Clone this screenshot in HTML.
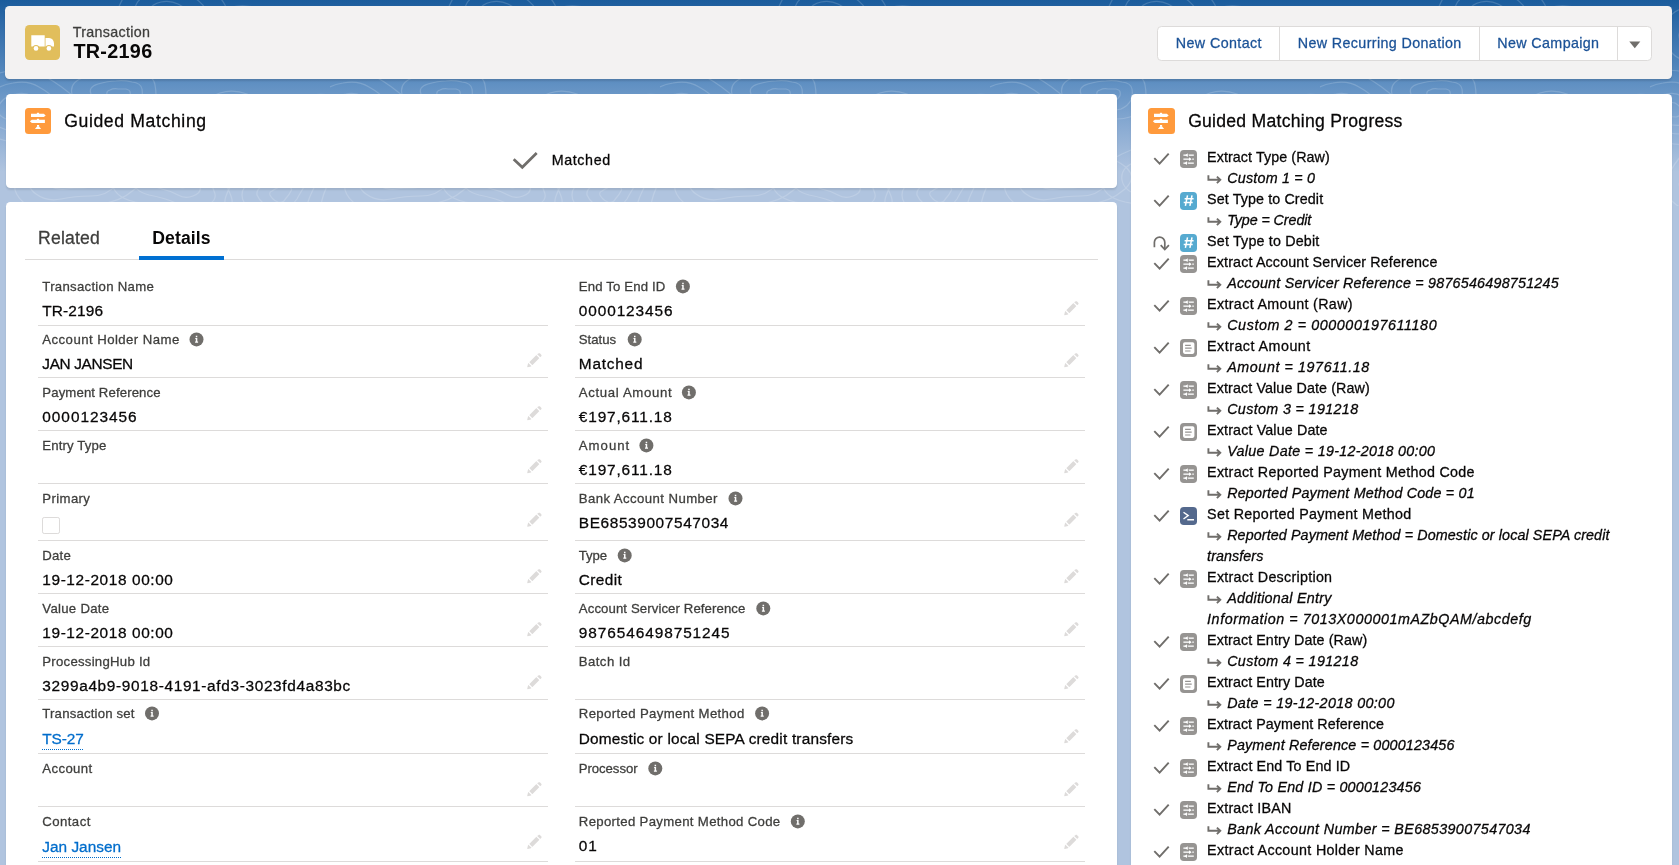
<!DOCTYPE html>
<html lang="en"><head><meta charset="utf-8"><title>TR-2196 | Transaction</title>
<style>
html,body{margin:0;padding:0}
body{width:1679px;height:865px;overflow:hidden;position:relative;background:#b0c4df;font-family:"Liberation Sans",sans-serif;font-size:14.3px;color:#080707}
.bg{position:absolute;left:0;top:0;width:1679px;height:172px;background:linear-gradient(to bottom,#1a5c9c 0,#2e6aa8 22px,#5a8cc0 78px,#88aad2 125px,#b0c4df 172px)}
.swirl{position:absolute;left:0;top:0}
.t{position:absolute;white-space:nowrap;margin:0;font-weight:normal;-webkit-text-stroke:.28px currentColor}
.card{position:absolute;background:#fff;border-radius:4.4px;box-shadow:0 2px 2px 0 rgba(0,0,0,.1)}
.hdr{position:absolute;left:5px;top:6px;width:1667px;height:72.5px;background:#f3f2f2;border-radius:4.4px;box-shadow:0 2px 2px 0 rgba(0,0,0,.12)}
.abs{position:absolute}
.app{position:absolute;left:0;top:0;width:1679px;height:865px;will-change:transform}
.btns{position:absolute;left:1157px;top:26px;width:495px;height:35px;box-sizing:border-box;border:1px solid #dddbda;border-radius:4.4px;background:#fff}
.btns i{position:absolute;top:0;width:1px;height:33px;background:#dddbda}
.line{position:absolute;height:1px;background:#dddbda}
a.t{text-decoration:underline dotted #006dcc;text-decoration-thickness:1px;text-underline-offset:4.500px}
.ic{position:absolute;width:17px;height:18px;border-radius:3.800px}
svg{display:block;overflow:visible}
</style></head><body>
<div class="bg"></div>
<svg class="swirl" width="1679" height="206" viewBox="0 0 1679 206"><defs><pattern id="topo" width="330" height="210" patternUnits="userSpaceOnUse"><path d="M65 33Q67 35 65 37Q62 39 59 40Q56 40 53 41Q49 42 46 40Q43 38 43 35Q44 32 46 30Q48 27 53 27Q57 27 60 29Q63 31 65 33zM78 30Q83 35 77 39Q70 44 64 45Q58 47 49 49Q41 52 35 47Q29 41 29 35Q30 29 35 23Q40 17 50 18Q59 19 66 22Q73 25 78 30zM94 26Q101 35 90 42Q78 48 69 52Q60 56 46 59Q32 63 23 54Q14 45 13 35Q12 24 21 15Q30 6 46 8Q61 10 74 14Q86 18 94 26zM176 17Q177 20 175 22Q173 25 170 25Q167 26 163 26Q160 26 157 25Q154 23 155 20Q156 18 158 15Q159 13 163 12Q167 11 171 13Q175 14 176 17zM190 14Q193 20 188 25Q182 30 175 31Q168 33 160 34Q153 35 147 30Q142 26 143 20Q145 15 149 10Q152 4 161 2Q170 -0 178 4Q186 8 190 14zM206 10Q212 20 202 28Q193 36 182 39Q171 41 157 43Q144 45 136 37Q128 29 130 21Q132 12 137 3Q143 -6 158 -9Q173 -12 187 -6Q201 -0 206 10zM225 5Q232 20 217 31Q203 42 188 47Q173 52 154 54Q135 56 124 44Q114 33 115 20Q117 8 125 -5Q133 -18 155 -21Q177 -25 197 -17Q217 -10 225 5zM285 43Q289 45 286 47Q283 50 280 50Q276 50 273 51Q270 51 267 49Q264 48 263 45Q262 42 265 39Q267 36 272 37Q277 39 279 40Q282 41 285 43zM298 41Q305 45 299 50Q293 55 286 56Q278 58 271 58Q264 59 258 55Q252 51 249 44Q245 38 251 31Q258 25 268 29Q278 32 285 34Q291 36 298 41zM313 37Q324 45 313 53Q303 61 292 64Q281 68 269 67Q257 67 248 60Q239 54 231 43Q223 32 235 23Q248 13 264 19Q280 25 292 27Q303 29 313 37zM330 33Q342 45 328 56Q315 68 299 74Q284 80 267 77Q250 74 237 66Q224 58 211 42Q197 26 217 13Q238 1 260 9Q282 17 300 19Q317 21 330 33zM30 108Q32 110 31 113Q31 116 26 117Q22 117 19 116Q16 115 13 114Q10 112 10 110Q10 107 12 106Q15 104 18 103Q22 102 25 103Q29 105 30 108zM43 105Q48 110 46 117Q44 124 34 125Q24 126 17 124Q10 121 4 118Q-2 115 -2 110Q-2 105 3 100Q8 95 16 94Q25 92 32 96Q39 99 43 105zM58 102Q67 110 63 121Q60 133 43 134Q27 135 15 132Q3 130 -6 124Q-16 119 -15 110Q-15 101 -8 93Q-1 85 13 83Q28 80 39 87Q50 93 58 102zM75 98Q89 110 82 126Q76 142 52 144Q29 146 12 142Q-5 139 -17 131Q-30 122 -29 110Q-29 98 -20 86Q-11 73 10 71Q31 68 46 77Q62 86 75 98zM130 92Q131 95 129 97Q128 99 125 101Q122 102 119 101Q116 100 112 99Q109 98 107 95Q106 91 110 90Q114 88 118 89Q122 89 126 89Q130 90 130 92zM142 89Q143 95 141 100Q138 106 131 109Q124 111 117 109Q111 106 103 104Q95 101 91 94Q88 87 98 84Q108 81 116 81Q124 80 132 82Q141 83 142 89zM155 85Q157 95 155 104Q152 114 140 117Q127 121 116 117Q105 113 90 109Q76 106 72 94Q69 82 85 77Q101 73 114 71Q127 69 140 72Q154 76 155 85zM236 117Q237 120 235 123Q234 125 230 126Q227 127 224 126Q222 124 218 123Q215 123 213 120Q212 117 216 115Q220 114 223 113Q227 112 231 113Q236 114 236 117zM249 113Q251 120 248 126Q246 132 237 133Q229 135 223 132Q217 129 209 127Q201 126 199 120Q197 113 206 110Q214 107 222 104Q230 102 239 104Q248 107 249 113zM264 110Q268 120 264 130Q261 141 246 142Q231 142 222 139Q212 135 197 133Q183 130 182 120Q181 109 194 104Q206 98 220 93Q233 89 247 94Q261 99 264 110zM320 137Q320 140 320 143Q320 146 316 148Q313 150 309 148Q306 145 304 144Q303 142 302 140Q301 138 303 136Q305 134 309 133Q312 131 316 133Q320 134 320 137zM332 134Q332 140 333 147Q334 154 325 158Q316 161 308 156Q300 152 296 148Q292 144 292 140Q292 135 295 131Q299 127 307 123Q315 119 324 123Q332 127 332 134zM346 130Q348 140 349 152Q351 164 335 168Q319 173 306 167Q293 160 286 154Q279 148 281 140Q282 133 287 126Q292 119 306 112Q319 104 332 112Q344 120 346 130zM361 127Q366 140 368 157Q370 174 346 180Q322 185 303 177Q285 169 275 160Q265 151 269 141Q273 131 278 120Q283 109 303 99Q323 89 340 101Q356 114 361 127zM81 173Q83 175 82 178Q81 181 76 181Q72 181 68 181Q65 181 61 180Q57 178 59 176Q61 173 63 171Q66 170 69 169Q72 168 75 169Q78 171 81 173zM94 170Q101 175 97 182Q93 188 83 188Q73 188 65 189Q57 190 49 186Q41 182 46 176Q51 170 55 166Q59 162 67 161Q74 159 80 162Q87 165 94 170zM111 167Q124 175 116 185Q107 196 91 196Q75 196 61 199Q47 202 36 194Q25 186 32 177Q39 167 45 160Q51 153 64 152Q76 150 87 155Q98 159 111 167zM130 163Q150 175 135 189Q119 203 98 204Q78 206 57 210Q36 215 23 202Q10 190 17 177Q24 164 33 153Q42 141 60 142Q78 143 94 147Q111 152 130 163zM188 178Q188 180 189 183Q189 185 186 187Q182 189 179 187Q176 185 172 184Q169 183 167 180Q165 176 170 175Q174 173 178 173Q182 173 185 174Q188 175 188 178zM197 175Q198 180 200 186Q202 193 193 196Q185 199 178 195Q171 191 162 189Q153 187 151 179Q148 172 158 169Q168 166 176 165Q184 164 190 167Q197 170 197 175zM208 173Q210 180 214 191Q219 202 203 206Q188 209 176 203Q165 198 149 195Q134 191 132 180Q130 168 145 162Q160 156 174 154Q187 152 196 159Q205 166 208 173zM218 171Q225 180 231 196Q237 212 213 215Q190 218 174 212Q158 206 135 202Q112 197 112 180Q113 163 132 154Q150 145 171 142Q191 138 202 150Q212 162 218 171zM291 191Q289 195 287 197Q286 198 284 201Q282 203 278 202Q275 201 273 199Q271 197 270 195Q269 192 272 191Q275 189 279 187Q282 186 288 187Q293 188 291 191zM304 187Q299 195 297 199Q294 203 289 208Q285 214 277 211Q269 208 264 204Q259 200 257 195Q256 189 263 186Q269 183 277 178Q286 174 297 176Q308 179 304 187zM317 182Q310 195 308 202Q306 210 297 217Q288 224 275 220Q262 216 252 210Q242 204 242 195Q242 186 253 180Q263 175 277 166Q290 157 307 163Q325 169 317 182zM331 178Q322 195 321 206Q320 218 305 226Q290 234 273 229Q255 224 238 217Q221 210 226 196Q230 183 243 175Q256 167 276 153Q295 139 318 150Q341 160 331 178z" fill="none" stroke="#fff" stroke-opacity=".17" stroke-width="1.2"/></pattern></defs><rect width="1679" height="206" fill="url(#topo)"/></svg>
<main class="app">

<header class="hdr">
<div class="abs" style="left:20px;top:19px;width:35px;height:35px;border-radius:4.4px;background:#e1be5c"><svg width="35" height="35" viewBox="0 0 35 35"><path fill="#fff" d="M6.300 10.200h13.400v11.300H6.300zM20.500 13h3.600c3 .2 4.700 2.400 4.900 5.200v3.300h-8.500z"/><circle cx="11" cy="23.400" r="3.500" fill="#e1be5c"/><circle cx="23.900" cy="23.400" r="3.500" fill="#e1be5c"/><circle cx="11" cy="23.400" r="2.300" fill="#fff"/><circle cx="23.900" cy="23.400" r="2.300" fill="#fff"/></svg></div>
</header>
<div id="t1" class="t " style="left:72.74px;top:22px;font-size:14.3px;line-height:21px;color:#3e3e3c;letter-spacing:0.300px;">Transaction</div>
<h1 id="t2" class="t " style="left:73.41px;top:36px;font-size:19.8px;line-height:30px;color:#080707;font-weight:bold;-webkit-text-stroke:0;letter-spacing:0.297px;">TR-2196</h1>
<div class="btns"><i style="left:121px"></i><i style="left:321px"></i><i style="left:459px"></i><svg class="abs" style="left:471px;top:14px" width="12" height="8" viewBox="0 0 12 8"><path d="M0.300 0.500h11L5.800 7.300z" fill="#706e6b"/></svg></div>
<div id="t3" class="t " style="left:1175.74px;top:33px;font-size:14.3px;line-height:21px;color:#1b5297;letter-spacing:0.400px;">New Contact</div>
<div id="t4" class="t " style="left:1297.74px;top:33px;font-size:14.3px;line-height:21px;color:#1b5297;letter-spacing:0.372px;">New Recurring Donation</div>
<div id="t5" class="t " style="left:1497.34px;top:33px;font-size:14.3px;line-height:21px;color:#1b5297;letter-spacing:0.363px;">New Campaign</div>
<section class="card" style="left:6px;top:94px;width:1111px;height:93.500px">
<div class="abs" style="left:19px;top:14px;width:26px;height:26px;border-radius:3.500px;background:#ff9a3c"><svg width="26" height="26" viewBox="0 0 26 26"><g fill="#fff"><rect x="11.900" y="4.800" width="2.200" height="1.200"/><path d="M6 5.800H18.800L20.700 7.450 18.800 9.100H6z"/><rect x="11.900" y="10.800" width="2.200" height="1.200"/><path d="M19.900 11.800H6.800L4.900 13.350 6.800 14.900H19.900z"/><rect x="12" y="17" width="2.100" height="1.800"/><path d="M12 18.500h2.100l2 2.500H9.900z"/></g></svg></div>
<svg class="abs" style="left:506px;top:57px" width="28" height="20" viewBox="0 0 28 20"><path d="M1.700 8.200l8.600 8.100L24.700 2" fill="none" stroke="#706e6b" stroke-width="2.700"/></svg>
</section>
<h2 id="t6" class="t " style="left:64.14px;top:108px;font-size:17.6px;line-height:26px;color:#080707;letter-spacing:0.643px;">Guided Matching</h2>
<div id="t7" class="t " style="left:551.74px;top:150px;font-size:14.3px;line-height:21px;color:#080707;letter-spacing:0.602px;">Matched</div>
<section class="card" style="left:6px;top:202px;width:1111px;height:700px"></section>
<div id="t8" class="t " style="left:38.04px;top:225px;font-size:17.6px;line-height:26px;color:#3e3e3c;letter-spacing:0.200px;">Related</div>
<div id="t9" class="t " style="left:152.34px;top:225px;font-size:17.6px;line-height:26px;color:#080707;font-weight:bold;-webkit-text-stroke:0;letter-spacing:0.069px;">Details</div>
<div class="line" style="left:25px;top:259px;width:1073px"></div>
<div class="abs" style="left:139px;top:256px;width:85px;height:3.500px;background:#0070d2"></div>
<div class="fld">
<span id="t10" class="t " style="left:42.30px;top:277px;font-size:13.2px;line-height:20px;color:#3e3e3c;letter-spacing:0.283px;">Transaction Name</span>
<span id="t11" class="t " style="left:42.30px;top:299px;font-size:15.4px;line-height:23px;color:#080707;letter-spacing:0.137px;">TR-2196</span>
<div class="line" style="left:38px;top:325px;width:510px"></div>
</div>
<div class="fld">
<span id="t12" class="t " style="left:42.30px;top:330px;font-size:13.2px;line-height:20px;color:#3e3e3c;letter-spacing:0.445px;">Account Holder Name</span>
<svg class="abs" style="left:189px;top:332px" width="15" height="15"><g transform="translate(0.50,0.50)"><circle cx="7" cy="6.900" r="7" fill="#706e6b"/><path d="M6.300 3.300h1.500v1.500H6.300zM5.800 5.400h2v3.700h.8v1.200H5.600V9.100h.7V6.400h-.5z" fill="#fff"/></g></svg>
<span id="t13" class="t " style="left:42.30px;top:352px;font-size:15.4px;line-height:23px;color:#080707;letter-spacing:-0.357px;">JAN JANSEN</span>
<svg class="abs" style="left:526px;top:352px" width="17" height="17"><g transform="translate(0.60,0.30) scale(0.30000)"><path fill="#dddbda" d="M9.500 33.400l8.900 8.900c.4.400 1 .4 1.400 0L42 20c.4-.4.4-1 0-1.400l-8.800-8.800c-.4-.4-1-.4-1.400 0L9.500 32.100c-.4.400-.4 1 0 1.300zM36.100 5.700c-.4.400-.4 1 0 1.400l8.800 8.800c.4.400 1 .4 1.400 0l2.500-2.500c1.600-1.500 1.600-3.900 0-5.500l-3.800-3.800c-1.600-1.600-4.100-1.600-5.700 0l-3.200 1.600zM2.100 48.200c-.2 1 .7 1.900 1.700 1.700l10.900-2.600c.4-.1.700-.3.900-.5l.2-.2c.2-.2.300-.9-.1-1.300l-9-9c-.4-.4-1.100-.3-1.300-.1l-.2.200c-.3.300-.4.600-.5.900L2.100 48.200z"/></g></svg>
<div class="line" style="left:38px;top:377px;width:510px"></div>
</div>
<div class="fld">
<span id="t14" class="t " style="left:42.30px;top:383px;font-size:13.2px;line-height:20px;color:#3e3e3c;letter-spacing:0.109px;">Payment Reference</span>
<span id="t15" class="t " style="left:42.30px;top:405px;font-size:15.4px;line-height:23px;color:#080707;letter-spacing:0.976px;">0000123456</span>
<svg class="abs" style="left:526px;top:405px" width="17" height="17"><g transform="translate(0.60,0.30) scale(0.30000)"><path fill="#dddbda" d="M9.500 33.400l8.900 8.900c.4.400 1 .4 1.400 0L42 20c.4-.4.4-1 0-1.400l-8.800-8.800c-.4-.4-1-.4-1.400 0L9.500 32.100c-.4.400-.4 1 0 1.300zM36.100 5.700c-.4.400-.4 1 0 1.400l8.800 8.800c.4.400 1 .4 1.400 0l2.500-2.500c1.600-1.500 1.600-3.900 0-5.500l-3.800-3.800c-1.600-1.600-4.100-1.600-5.700 0l-3.200 1.600zM2.100 48.200c-.2 1 .7 1.900 1.700 1.700l10.900-2.600c.4-.1.700-.3.900-.5l.2-.2c.2-.2.300-.9-.1-1.300l-9-9c-.4-.4-1.100-.3-1.300-.1l-.2.200c-.3.300-.4.600-.5.900L2.100 48.200z"/></g></svg>
<div class="line" style="left:38px;top:430px;width:510px"></div>
</div>
<div class="fld">
<span id="t16" class="t " style="left:42.30px;top:436px;font-size:13.2px;line-height:20px;color:#3e3e3c;letter-spacing:0.126px;">Entry Type</span>
<svg class="abs" style="left:526px;top:458px" width="17" height="17"><g transform="translate(0.60,0.30) scale(0.30000)"><path fill="#dddbda" d="M9.500 33.400l8.900 8.900c.4.400 1 .4 1.400 0L42 20c.4-.4.4-1 0-1.400l-8.800-8.800c-.4-.4-1-.4-1.400 0L9.500 32.100c-.4.400-.4 1 0 1.300zM36.100 5.700c-.4.400-.4 1 0 1.400l8.800 8.800c.4.400 1 .4 1.400 0l2.500-2.500c1.600-1.500 1.600-3.900 0-5.500l-3.800-3.800c-1.600-1.600-4.100-1.600-5.700 0l-3.200 1.600zM2.100 48.200c-.2 1 .7 1.900 1.700 1.700l10.900-2.600c.4-.1.700-.3.900-.5l.2-.2c.2-.2.300-.9-.1-1.300l-9-9c-.4-.4-1.100-.3-1.300-.1l-.2.200c-.3.300-.4.600-.5.900L2.100 48.200z"/></g></svg>
<div class="line" style="left:38px;top:483px;width:510px"></div>
</div>
<div class="fld">
<span id="t17" class="t " style="left:42.30px;top:489px;font-size:13.2px;line-height:20px;color:#3e3e3c;letter-spacing:0.370px;">Primary</span>
<svg class="abs" style="left:526px;top:511px" width="17" height="17"><g transform="translate(0.60,0.80) scale(0.30000)"><path fill="#dddbda" d="M9.500 33.400l8.900 8.900c.4.400 1 .4 1.400 0L42 20c.4-.4.4-1 0-1.400l-8.800-8.800c-.4-.4-1-.4-1.400 0L9.500 32.100c-.4.400-.4 1 0 1.300zM36.100 5.700c-.4.400-.4 1 0 1.400l8.800 8.800c.4.400 1 .4 1.400 0l2.500-2.500c1.600-1.500 1.600-3.900 0-5.500l-3.800-3.800c-1.600-1.600-4.100-1.600-5.700 0l-3.200 1.600zM2.100 48.200c-.2 1 .7 1.900 1.700 1.700l10.900-2.600c.4-.1.700-.3.900-.5l.2-.2c.2-.2.300-.9-.1-1.300l-9-9c-.4-.4-1.100-.3-1.300-.1l-.2.200c-.3.300-.4.600-.5.900L2.100 48.200z"/></g></svg>
<div class="line" style="left:38px;top:540px;width:510px"></div>
</div>
<div class="fld">
<span id="t18" class="t " style="left:42.30px;top:546px;font-size:13.2px;line-height:20px;color:#3e3e3c;letter-spacing:0.198px;">Date</span>
<span id="t19" class="t " style="left:42.30px;top:568px;font-size:15.4px;line-height:23px;color:#080707;letter-spacing:0.608px;">19-12-2018 00:00</span>
<svg class="abs" style="left:526px;top:568px" width="17" height="17"><g transform="translate(0.60,0.30) scale(0.30000)"><path fill="#dddbda" d="M9.500 33.400l8.900 8.900c.4.400 1 .4 1.400 0L42 20c.4-.4.4-1 0-1.400l-8.800-8.800c-.4-.4-1-.4-1.400 0L9.500 32.100c-.4.400-.4 1 0 1.300zM36.100 5.700c-.4.400-.4 1 0 1.400l8.800 8.800c.4.400 1 .4 1.400 0l2.500-2.500c1.600-1.500 1.600-3.900 0-5.500l-3.800-3.800c-1.600-1.600-4.100-1.600-5.700 0l-3.200 1.600zM2.100 48.200c-.2 1 .7 1.900 1.700 1.700l10.900-2.600c.4-.1.700-.3.900-.5l.2-.2c.2-.2.300-.9-.1-1.300l-9-9c-.4-.4-1.100-.3-1.300-.1l-.2.200c-.3.300-.4.600-.5.900L2.100 48.200z"/></g></svg>
<div class="line" style="left:38px;top:593px;width:510px"></div>
</div>
<div class="fld">
<span id="t20" class="t " style="left:42.30px;top:599px;font-size:13.2px;line-height:20px;color:#3e3e3c;letter-spacing:0.285px;">Value Date</span>
<span id="t21" class="t " style="left:42.30px;top:621px;font-size:15.4px;line-height:23px;color:#080707;letter-spacing:0.608px;">19-12-2018 00:00</span>
<svg class="abs" style="left:526px;top:621px" width="17" height="17"><g transform="translate(0.60,0.30) scale(0.30000)"><path fill="#dddbda" d="M9.500 33.400l8.900 8.900c.4.400 1 .4 1.400 0L42 20c.4-.4.4-1 0-1.400l-8.800-8.800c-.4-.4-1-.4-1.400 0L9.500 32.100c-.4.400-.4 1 0 1.300zM36.100 5.700c-.4.400-.4 1 0 1.400l8.800 8.800c.4.400 1 .4 1.400 0l2.500-2.500c1.600-1.500 1.600-3.900 0-5.500l-3.800-3.800c-1.600-1.600-4.100-1.600-5.700 0l-3.200 1.600zM2.100 48.200c-.2 1 .7 1.900 1.700 1.700l10.900-2.600c.4-.1.700-.3.900-.5l.2-.2c.2-.2.300-.9-.1-1.300l-9-9c-.4-.4-1.100-.3-1.300-.1l-.2.200c-.3.300-.4.600-.5.900L2.100 48.200z"/></g></svg>
<div class="line" style="left:38px;top:646px;width:510px"></div>
</div>
<div class="fld">
<span id="t22" class="t " style="left:42.30px;top:652px;font-size:13.2px;line-height:20px;color:#3e3e3c;letter-spacing:0.250px;">ProcessingHub Id</span>
<span id="t23" class="t " style="left:42.30px;top:674px;font-size:15.4px;line-height:23px;color:#080707;letter-spacing:0.657px;">3299a4b9-9018-4191-afd3-3023fd4a83bc</span>
<svg class="abs" style="left:526px;top:674px" width="17" height="17"><g transform="translate(0.60,0.30) scale(0.30000)"><path fill="#dddbda" d="M9.500 33.400l8.900 8.900c.4.400 1 .4 1.400 0L42 20c.4-.4.4-1 0-1.400l-8.800-8.800c-.4-.4-1-.4-1.400 0L9.500 32.100c-.4.400-.4 1 0 1.300zM36.100 5.700c-.4.400-.4 1 0 1.400l8.800 8.800c.4.400 1 .4 1.400 0l2.500-2.500c1.600-1.500 1.600-3.900 0-5.500l-3.800-3.800c-1.600-1.600-4.100-1.600-5.700 0l-3.200 1.600zM2.100 48.200c-.2 1 .7 1.900 1.700 1.700l10.900-2.600c.4-.1.700-.3.900-.5l.2-.2c.2-.2.300-.9-.1-1.300l-9-9c-.4-.4-1.100-.3-1.300-.1l-.2.200c-.3.300-.4.600-.5.900L2.100 48.200z"/></g></svg>
<div class="line" style="left:38px;top:699px;width:510px"></div>
</div>
<div class="fld">
<span id="t24" class="t " style="left:42.30px;top:704px;font-size:13.2px;line-height:20px;color:#3e3e3c;letter-spacing:0.182px;">Transaction set</span>
<svg class="abs" style="left:145px;top:706px" width="15" height="15"><g transform="translate(0.00,0.50)"><circle cx="7" cy="6.900" r="7" fill="#706e6b"/><path d="M6.300 3.300h1.500v1.500H6.300zM5.800 5.400h2v3.700h.8v1.200H5.600V9.100h.7V6.400h-.5z" fill="#fff"/></g></svg>
<a id="t25" class="t " style="left:42.30px;top:727px;font-size:15.4px;line-height:23px;color:#006dcc;letter-spacing:-0.100px;">TS-27</a>
<div class="line" style="left:38px;top:753px;width:510px"></div>
</div>
<div class="fld">
<span id="t26" class="t " style="left:42.30px;top:759px;font-size:13.2px;line-height:20px;color:#3e3e3c;letter-spacing:0.370px;">Account</span>
<svg class="abs" style="left:526px;top:781px" width="17" height="17"><g transform="translate(0.60,0.30) scale(0.30000)"><path fill="#dddbda" d="M9.500 33.400l8.900 8.900c.4.400 1 .4 1.400 0L42 20c.4-.4.4-1 0-1.400l-8.800-8.800c-.4-.4-1-.4-1.400 0L9.500 32.100c-.4.400-.4 1 0 1.300zM36.100 5.700c-.4.400-.4 1 0 1.400l8.800 8.800c.4.400 1 .4 1.400 0l2.500-2.500c1.600-1.500 1.600-3.900 0-5.500l-3.800-3.800c-1.600-1.600-4.100-1.600-5.700 0l-3.200 1.600zM2.100 48.200c-.2 1 .7 1.900 1.700 1.700l10.900-2.600c.4-.1.700-.3.900-.5l.2-.2c.2-.2.300-.9-.1-1.300l-9-9c-.4-.4-1.100-.3-1.300-.1l-.2.200c-.3.300-.4.600-.5.900L2.100 48.200z"/></g></svg>
<div class="line" style="left:38px;top:806px;width:510px"></div>
</div>
<div class="fld">
<span id="t27" class="t " style="left:42.30px;top:812px;font-size:13.2px;line-height:20px;color:#3e3e3c;letter-spacing:0.430px;">Contact</span>
<a id="t28" class="t " style="left:42.30px;top:835px;font-size:15.4px;line-height:23px;color:#006dcc;">Jan Jansen</a>
<svg class="abs" style="left:526px;top:834px" width="17" height="17"><g transform="translate(0.60,0.00) scale(0.30000)"><path fill="#dddbda" d="M9.500 33.400l8.900 8.900c.4.400 1 .4 1.400 0L42 20c.4-.4.4-1 0-1.400l-8.800-8.800c-.4-.4-1-.4-1.400 0L9.500 32.100c-.4.400-.4 1 0 1.300zM36.100 5.700c-.4.400-.4 1 0 1.400l8.800 8.800c.4.400 1 .4 1.400 0l2.500-2.500c1.600-1.500 1.600-3.900 0-5.500l-3.800-3.800c-1.600-1.600-4.100-1.600-5.700 0l-3.200 1.600zM2.100 48.200c-.2 1 .7 1.900 1.700 1.700l10.900-2.600c.4-.1.700-.3.900-.5l.2-.2c.2-.2.300-.9-.1-1.300l-9-9c-.4-.4-1.100-.3-1.300-.1l-.2.200c-.3.300-.4.600-.5.900L2.100 48.200z"/></g></svg>
<div class="line" style="left:38px;top:861px;width:510px"></div>
</div>
<div class="fld">
<span id="t29" class="t " style="left:578.80px;top:277px;font-size:13.2px;line-height:20px;color:#3e3e3c;letter-spacing:0.145px;">End To End ID</span>
<svg class="abs" style="left:675px;top:279px" width="15" height="15"><g transform="translate(0.90,0.50)"><circle cx="7" cy="6.900" r="7" fill="#706e6b"/><path d="M6.300 3.300h1.500v1.500H6.300zM5.800 5.400h2v3.700h.8v1.200H5.600V9.100h.7V6.400h-.5z" fill="#fff"/></g></svg>
<span id="t30" class="t " style="left:578.80px;top:299px;font-size:15.4px;line-height:23px;color:#080707;letter-spacing:0.904px;">0000123456</span>
<svg class="abs" style="left:1063px;top:300px" width="17" height="17"><g transform="translate(0.60,0.30) scale(0.30000)"><path fill="#dddbda" d="M9.500 33.400l8.900 8.900c.4.400 1 .4 1.400 0L42 20c.4-.4.4-1 0-1.400l-8.800-8.800c-.4-.4-1-.4-1.400 0L9.500 32.100c-.4.400-.4 1 0 1.300zM36.100 5.700c-.4.400-.4 1 0 1.400l8.800 8.800c.4.400 1 .4 1.400 0l2.500-2.500c1.600-1.500 1.600-3.900 0-5.500l-3.800-3.800c-1.600-1.600-4.100-1.600-5.700 0l-3.200 1.600zM2.100 48.200c-.2 1 .7 1.900 1.700 1.700l10.900-2.600c.4-.1.700-.3.900-.5l.2-.2c.2-.2.300-.9-.1-1.300l-9-9c-.4-.4-1.100-.3-1.300-.1l-.2.200c-.3.300-.4.600-.5.900L2.100 48.200z"/></g></svg>
<div class="line" style="left:575px;top:325px;width:510px"></div>
</div>
<div class="fld">
<span id="t31" class="t " style="left:578.80px;top:330px;font-size:13.2px;line-height:20px;color:#3e3e3c;">Status</span>
<svg class="abs" style="left:627px;top:332px" width="15" height="15"><g transform="translate(0.70,0.50)"><circle cx="7" cy="6.900" r="7" fill="#706e6b"/><path d="M6.300 3.300h1.500v1.500H6.300zM5.800 5.400h2v3.700h.8v1.200H5.600V9.100h.7V6.400h-.5z" fill="#fff"/></g></svg>
<span id="t32" class="t " style="left:578.80px;top:352px;font-size:15.4px;line-height:23px;color:#080707;letter-spacing:0.768px;">Matched</span>
<svg class="abs" style="left:1063px;top:352px" width="17" height="17"><g transform="translate(0.60,0.30) scale(0.30000)"><path fill="#dddbda" d="M9.500 33.400l8.900 8.900c.4.400 1 .4 1.400 0L42 20c.4-.4.4-1 0-1.400l-8.800-8.800c-.4-.4-1-.4-1.400 0L9.500 32.100c-.4.400-.4 1 0 1.300zM36.100 5.700c-.4.400-.4 1 0 1.400l8.800 8.800c.4.400 1 .4 1.400 0l2.500-2.500c1.600-1.500 1.600-3.900 0-5.500l-3.800-3.800c-1.600-1.600-4.100-1.600-5.700 0l-3.200 1.600zM2.100 48.200c-.2 1 .7 1.900 1.700 1.700l10.900-2.600c.4-.1.700-.3.900-.5l.2-.2c.2-.2.300-.9-.1-1.300l-9-9c-.4-.4-1.100-.3-1.300-.1l-.2.200c-.3.300-.4.600-.5.900L2.100 48.200z"/></g></svg>
<div class="line" style="left:575px;top:377px;width:510px"></div>
</div>
<div class="fld">
<span id="t33" class="t " style="left:578.80px;top:383px;font-size:13.2px;line-height:20px;color:#3e3e3c;letter-spacing:0.647px;">Actual Amount</span>
<svg class="abs" style="left:681px;top:385px" width="15" height="15"><g transform="translate(0.90,0.50)"><circle cx="7" cy="6.900" r="7" fill="#706e6b"/><path d="M6.300 3.300h1.500v1.500H6.300zM5.800 5.400h2v3.700h.8v1.200H5.600V9.100h.7V6.400h-.5z" fill="#fff"/></g></svg>
<span id="t34" class="t " style="left:578.80px;top:405px;font-size:15.4px;line-height:23px;color:#080707;letter-spacing:0.860px;">€197,611.18</span>
<div class="line" style="left:575px;top:430px;width:510px"></div>
</div>
<div class="fld">
<span id="t35" class="t " style="left:578.80px;top:436px;font-size:13.2px;line-height:20px;color:#3e3e3c;letter-spacing:1.000px;">Amount</span>
<svg class="abs" style="left:639px;top:438px" width="15" height="15"><g transform="translate(0.40,0.50)"><circle cx="7" cy="6.900" r="7" fill="#706e6b"/><path d="M6.300 3.300h1.500v1.500H6.300zM5.800 5.400h2v3.700h.8v1.200H5.600V9.100h.7V6.400h-.5z" fill="#fff"/></g></svg>
<span id="t36" class="t " style="left:578.80px;top:458px;font-size:15.4px;line-height:23px;color:#080707;letter-spacing:0.860px;">€197,611.18</span>
<svg class="abs" style="left:1063px;top:458px" width="17" height="17"><g transform="translate(0.60,0.30) scale(0.30000)"><path fill="#dddbda" d="M9.500 33.400l8.900 8.900c.4.400 1 .4 1.400 0L42 20c.4-.4.4-1 0-1.400l-8.800-8.800c-.4-.4-1-.4-1.400 0L9.500 32.100c-.4.400-.4 1 0 1.300zM36.100 5.700c-.4.400-.4 1 0 1.400l8.800 8.800c.4.400 1 .4 1.400 0l2.500-2.500c1.600-1.500 1.600-3.900 0-5.500l-3.800-3.800c-1.600-1.600-4.100-1.600-5.700 0l-3.200 1.600zM2.100 48.200c-.2 1 .7 1.900 1.700 1.700l10.900-2.600c.4-.1.700-.3.900-.5l.2-.2c.2-.2.300-.9-.1-1.300l-9-9c-.4-.4-1.100-.3-1.300-.1l-.2.200c-.3.300-.4.600-.5.900L2.100 48.200z"/></g></svg>
<div class="line" style="left:575px;top:483px;width:510px"></div>
</div>
<div class="fld">
<span id="t37" class="t " style="left:578.80px;top:489px;font-size:13.2px;line-height:20px;color:#3e3e3c;letter-spacing:0.411px;">Bank Account Number</span>
<svg class="abs" style="left:728px;top:491px" width="15" height="15"><g transform="translate(0.50,0.50)"><circle cx="7" cy="6.900" r="7" fill="#706e6b"/><path d="M6.300 3.300h1.500v1.500H6.300zM5.800 5.400h2v3.700h.8v1.200H5.600V9.100h.7V6.400h-.5z" fill="#fff"/></g></svg>
<span id="t38" class="t " style="left:578.80px;top:511px;font-size:15.4px;line-height:23px;color:#080707;letter-spacing:0.617px;">BE68539007547034</span>
<svg class="abs" style="left:1063px;top:511px" width="17" height="17"><g transform="translate(0.60,0.80) scale(0.30000)"><path fill="#dddbda" d="M9.500 33.400l8.900 8.900c.4.400 1 .4 1.400 0L42 20c.4-.4.4-1 0-1.400l-8.800-8.800c-.4-.4-1-.4-1.400 0L9.500 32.100c-.4.400-.4 1 0 1.300zM36.100 5.700c-.4.400-.4 1 0 1.400l8.800 8.800c.4.400 1 .4 1.400 0l2.500-2.500c1.600-1.500 1.600-3.900 0-5.500l-3.800-3.800c-1.600-1.600-4.100-1.600-5.700 0l-3.200 1.600zM2.100 48.200c-.2 1 .7 1.900 1.700 1.700l10.900-2.600c.4-.1.700-.3.900-.5l.2-.2c.2-.2.300-.9-.1-1.300l-9-9c-.4-.4-1.100-.3-1.300-.1l-.2.200c-.3.300-.4.600-.5.900L2.100 48.200z"/></g></svg>
<div class="line" style="left:575px;top:540px;width:510px"></div>
</div>
<div class="fld">
<span id="t39" class="t " style="left:578.80px;top:546px;font-size:13.2px;line-height:20px;color:#3e3e3c;letter-spacing:-0.063px;">Type</span>
<svg class="abs" style="left:617px;top:548px" width="15" height="15"><g transform="translate(0.70,0.50)"><circle cx="7" cy="6.900" r="7" fill="#706e6b"/><path d="M6.300 3.300h1.500v1.500H6.300zM5.800 5.400h2v3.700h.8v1.200H5.600V9.100h.7V6.400h-.5z" fill="#fff"/></g></svg>
<span id="t40" class="t " style="left:578.80px;top:568px;font-size:15.4px;line-height:23px;color:#080707;letter-spacing:0.400px;">Credit</span>
<svg class="abs" style="left:1063px;top:568px" width="17" height="17"><g transform="translate(0.60,0.30) scale(0.30000)"><path fill="#dddbda" d="M9.500 33.400l8.900 8.900c.4.400 1 .4 1.400 0L42 20c.4-.4.4-1 0-1.400l-8.800-8.800c-.4-.4-1-.4-1.400 0L9.500 32.100c-.4.400-.4 1 0 1.300zM36.100 5.700c-.4.400-.4 1 0 1.400l8.800 8.800c.4.400 1 .4 1.400 0l2.500-2.500c1.600-1.500 1.600-3.900 0-5.500l-3.800-3.800c-1.600-1.600-4.100-1.600-5.700 0l-3.200 1.600zM2.100 48.200c-.2 1 .7 1.900 1.700 1.700l10.900-2.600c.4-.1.700-.3.900-.5l.2-.2c.2-.2.300-.9-.1-1.300l-9-9c-.4-.4-1.100-.3-1.300-.1l-.2.200c-.3.300-.4.600-.5.900L2.100 48.200z"/></g></svg>
<div class="line" style="left:575px;top:593px;width:510px"></div>
</div>
<div class="fld">
<span id="t41" class="t " style="left:578.80px;top:599px;font-size:13.2px;line-height:20px;color:#3e3e3c;letter-spacing:0.096px;">Account Servicer Reference</span>
<svg class="abs" style="left:756px;top:601px" width="15" height="15"><g transform="translate(0.30,0.50)"><circle cx="7" cy="6.900" r="7" fill="#706e6b"/><path d="M6.300 3.300h1.500v1.500H6.300zM5.800 5.400h2v3.700h.8v1.200H5.600V9.100h.7V6.400h-.5z" fill="#fff"/></g></svg>
<span id="t42" class="t " style="left:578.80px;top:621px;font-size:15.4px;line-height:23px;color:#080707;letter-spacing:0.925px;">9876546498751245</span>
<svg class="abs" style="left:1063px;top:621px" width="17" height="17"><g transform="translate(0.60,0.30) scale(0.30000)"><path fill="#dddbda" d="M9.500 33.400l8.900 8.900c.4.400 1 .4 1.400 0L42 20c.4-.4.4-1 0-1.400l-8.800-8.800c-.4-.4-1-.4-1.400 0L9.500 32.100c-.4.400-.4 1 0 1.300zM36.100 5.700c-.4.400-.4 1 0 1.400l8.800 8.800c.4.400 1 .4 1.400 0l2.500-2.500c1.600-1.500 1.600-3.900 0-5.500l-3.800-3.800c-1.600-1.600-4.100-1.600-5.700 0l-3.200 1.600zM2.100 48.200c-.2 1 .7 1.900 1.700 1.700l10.900-2.600c.4-.1.700-.3.900-.5l.2-.2c.2-.2.300-.9-.1-1.300l-9-9c-.4-.4-1.100-.3-1.300-.1l-.2.200c-.3.300-.4.600-.5.900L2.100 48.200z"/></g></svg>
<div class="line" style="left:575px;top:646px;width:510px"></div>
</div>
<div class="fld">
<span id="t43" class="t " style="left:578.80px;top:652px;font-size:13.2px;line-height:20px;color:#3e3e3c;letter-spacing:0.428px;">Batch Id</span>
<svg class="abs" style="left:1063px;top:674px" width="17" height="17"><g transform="translate(0.60,0.30) scale(0.30000)"><path fill="#dddbda" d="M9.500 33.400l8.900 8.900c.4.400 1 .4 1.400 0L42 20c.4-.4.4-1 0-1.400l-8.800-8.800c-.4-.4-1-.4-1.400 0L9.500 32.100c-.4.400-.4 1 0 1.300zM36.100 5.700c-.4.400-.4 1 0 1.400l8.800 8.800c.4.400 1 .4 1.400 0l2.500-2.500c1.600-1.500 1.600-3.900 0-5.500l-3.800-3.800c-1.600-1.600-4.100-1.600-5.700 0l-3.200 1.600zM2.100 48.200c-.2 1 .7 1.900 1.700 1.700l10.900-2.600c.4-.1.700-.3.900-.5l.2-.2c.2-.2.300-.9-.1-1.300l-9-9c-.4-.4-1.100-.3-1.300-.1l-.2.200c-.3.300-.4.600-.5.900L2.100 48.200z"/></g></svg>
<div class="line" style="left:575px;top:699px;width:510px"></div>
</div>
<div class="fld">
<span id="t44" class="t " style="left:578.80px;top:704px;font-size:13.2px;line-height:20px;color:#3e3e3c;letter-spacing:0.360px;">Reported Payment Method</span>
<svg class="abs" style="left:755px;top:706px" width="15" height="15"><g transform="translate(0.10,0.50)"><circle cx="7" cy="6.900" r="7" fill="#706e6b"/><path d="M6.300 3.300h1.500v1.500H6.300zM5.800 5.400h2v3.700h.8v1.200H5.600V9.100h.7V6.400h-.5z" fill="#fff"/></g></svg>
<span id="t45" class="t " style="left:578.80px;top:727px;font-size:15.4px;line-height:23px;color:#080707;letter-spacing:0.184px;">Domestic or local SEPA credit transfers</span>
<svg class="abs" style="left:1063px;top:728px" width="17" height="17"><g transform="translate(0.60,0.30) scale(0.30000)"><path fill="#dddbda" d="M9.500 33.400l8.900 8.900c.4.400 1 .4 1.400 0L42 20c.4-.4.4-1 0-1.400l-8.800-8.800c-.4-.4-1-.4-1.400 0L9.500 32.100c-.4.400-.4 1 0 1.300zM36.100 5.700c-.4.400-.4 1 0 1.400l8.800 8.800c.4.400 1 .4 1.400 0l2.500-2.500c1.600-1.500 1.600-3.900 0-5.500l-3.800-3.800c-1.600-1.600-4.100-1.600-5.700 0l-3.200 1.600zM2.100 48.200c-.2 1 .7 1.900 1.700 1.700l10.900-2.600c.4-.1.700-.3.900-.5l.2-.2c.2-.2.300-.9-.1-1.300l-9-9c-.4-.4-1.100-.3-1.300-.1l-.2.200c-.3.300-.4.600-.5.900L2.100 48.200z"/></g></svg>
<div class="line" style="left:575px;top:753px;width:510px"></div>
</div>
<div class="fld">
<span id="t46" class="t " style="left:578.80px;top:759px;font-size:13.2px;line-height:20px;color:#3e3e3c;letter-spacing:-0.075px;">Processor</span>
<svg class="abs" style="left:648px;top:761px" width="15" height="15"><g transform="translate(0.30,0.50)"><circle cx="7" cy="6.900" r="7" fill="#706e6b"/><path d="M6.300 3.300h1.500v1.500H6.300zM5.800 5.400h2v3.700h.8v1.200H5.600V9.100h.7V6.400h-.5z" fill="#fff"/></g></svg>
<svg class="abs" style="left:1063px;top:781px" width="17" height="17"><g transform="translate(0.60,0.30) scale(0.30000)"><path fill="#dddbda" d="M9.500 33.400l8.900 8.900c.4.400 1 .4 1.400 0L42 20c.4-.4.4-1 0-1.400l-8.800-8.800c-.4-.4-1-.4-1.400 0L9.500 32.100c-.4.400-.4 1 0 1.300zM36.100 5.700c-.4.400-.4 1 0 1.400l8.800 8.800c.4.400 1 .4 1.400 0l2.500-2.500c1.600-1.500 1.600-3.900 0-5.500l-3.800-3.800c-1.600-1.600-4.100-1.600-5.700 0l-3.200 1.600zM2.100 48.200c-.2 1 .7 1.900 1.700 1.700l10.900-2.600c.4-.1.700-.3.900-.5l.2-.2c.2-.2.300-.9-.1-1.300l-9-9c-.4-.4-1.100-.3-1.300-.1l-.2.200c-.3.300-.4.600-.5.900L2.100 48.200z"/></g></svg>
<div class="line" style="left:575px;top:806px;width:510px"></div>
</div>
<div class="fld">
<span id="t47" class="t " style="left:578.80px;top:812px;font-size:13.2px;line-height:20px;color:#3e3e3c;letter-spacing:0.318px;">Reported Payment Method Code</span>
<svg class="abs" style="left:790px;top:814px" width="15" height="15"><g transform="translate(0.80,0.50)"><circle cx="7" cy="6.900" r="7" fill="#706e6b"/><path d="M6.300 3.300h1.500v1.500H6.300zM5.800 5.400h2v3.700h.8v1.200H5.600V9.100h.7V6.400h-.5z" fill="#fff"/></g></svg>
<span id="t48" class="t " style="left:578.80px;top:834px;font-size:15.4px;line-height:23px;color:#080707;letter-spacing:1.000px;">01</span>
<svg class="abs" style="left:1063px;top:834px" width="17" height="17"><g transform="translate(0.60,0.00) scale(0.30000)"><path fill="#dddbda" d="M9.500 33.400l8.900 8.900c.4.400 1 .4 1.400 0L42 20c.4-.4.4-1 0-1.400l-8.800-8.800c-.4-.4-1-.4-1.400 0L9.500 32.100c-.4.400-.4 1 0 1.300zM36.100 5.700c-.4.400-.4 1 0 1.400l8.800 8.800c.4.400 1 .4 1.400 0l2.500-2.500c1.600-1.500 1.600-3.900 0-5.500l-3.800-3.800c-1.600-1.600-4.100-1.600-5.700 0l-3.200 1.600zM2.100 48.200c-.2 1 .7 1.900 1.700 1.700l10.900-2.600c.4-.1.700-.3.900-.5l.2-.2c.2-.2.300-.9-.1-1.300l-9-9c-.4-.4-1.100-.3-1.300-.1l-.2.200c-.3.300-.4.600-.5.900L2.100 48.200z"/></g></svg>
<div class="line" style="left:575px;top:861px;width:510px"></div>
</div>
<div class="abs" style="left:42px;top:516.500px;width:17.600px;height:17.600px;box-sizing:border-box;border:1px solid #dddbda;border-radius:2.200px;background:#fff"></div>
<section class="card" style="left:1131px;top:94px;width:541px;height:800px">
<div class="abs" style="left:17px;top:14px;width:26.500px;height:26px;border-radius:3.500px;background:#ff9a3c"><svg width="26" height="26" viewBox="0 0 26 26"><g fill="#fff"><rect x="11.900" y="4.800" width="2.200" height="1.200"/><path d="M6 5.800H18.800L20.700 7.450 18.800 9.100H6z"/><rect x="11.900" y="10.800" width="2.200" height="1.200"/><path d="M19.900 11.800H6.800L4.900 13.350 6.800 14.900H19.900z"/><rect x="12" y="17" width="2.100" height="1.800"/><path d="M12 18.500h2.100l2 2.500H9.900z"/></g></svg></div>
</section>
<h2 id="t49" class="t " style="left:1188.14px;top:108px;font-size:17.6px;line-height:26px;color:#080707;letter-spacing:0.260px;">Guided Matching Progress</h2>
<div class="step">
<svg class="abs" style="left:1152px;top:151.5px" width="19" height="14" viewBox="0 0 19 14"><path d="M2.300 6.200l5.300 5.500L16.700 1.700" fill="none" stroke="#706e6b" stroke-width="1.900"/></svg>
<div class="ic" style="left:1180px;top:150.0px;background:#969492"><svg width="17" height="18" viewBox="0 0 17 18"><g fill="#fff"><rect x="3.400" y="4.500" width="10.400" height="1.300"/><path d="M7.700 3.200v3.900L5.100 5.150z"/><rect x="3.400" y="8.500" width="7.300" height="1.300"/><path d="M9 7.200v3.900l2.600-1.950z"/><rect x="12.300" y="8.500" width="1.500" height="1.300"/><rect x="3.400" y="12.500" width="10.400" height="1.300"/><path d="M7 11.200v3.900l-2.600-1.950z"/></g><rect x="7.900" y="4.300" width=".9" height="1.700" fill="#969492"/><rect x="7.200" y="12.300" width=".9" height="1.700" fill="#969492"/></svg></div>
<span id="t50" class="t " style="left:1207.10px;top:147px;font-size:14.3px;line-height:21px;color:#080707;letter-spacing:0.079px;">Extract Type (Raw)</span>
<svg class="abs" style="left:1207px;top:175.0px" width="15" height="10" viewBox="0 0 15 10"><path d="M1.400 0.200V4.800H12.600M9.900 1.600l3.400 3.200-3.400 3.300" fill="none" stroke="#706e6b" stroke-width="1.900"/></svg>
<span id="t51" class="t " style="left:1227.20px;top:168px;font-size:14.3px;line-height:21px;color:#080707;font-style:italic;letter-spacing:0.222px;">Custom 1 = 0</span>
</div>
<div class="step">
<svg class="abs" style="left:1152px;top:193.5px" width="19" height="14" viewBox="0 0 19 14"><path d="M2.300 6.200l5.300 5.500L16.700 1.700" fill="none" stroke="#706e6b" stroke-width="1.900"/></svg>
<div class="ic" style="left:1180px;top:192.0px;background:#56aad0"><svg width="17" height="18" viewBox="0 0 17 18"><path d="M7.500 3.300L5.400 13.800M12 3.300L9.900 13.800M4.600 6.800h9M3.700 10.400h9" stroke="#fff" stroke-width="1.500" fill="none"/></svg></div>
<span id="t52" class="t " style="left:1207.10px;top:189px;font-size:14.3px;line-height:21px;color:#080707;letter-spacing:0.108px;">Set Type to Credit</span>
<svg class="abs" style="left:1207px;top:217.0px" width="15" height="10" viewBox="0 0 15 10"><path d="M1.400 0.200V4.800H12.600M9.900 1.600l3.400 3.200-3.400 3.300" fill="none" stroke="#706e6b" stroke-width="1.900"/></svg>
<span id="t53" class="t " style="left:1227.20px;top:210px;font-size:14.3px;line-height:21px;color:#080707;font-style:italic;letter-spacing:-0.083px;">Type = Credit</span>
</div>
<div class="step">
<svg class="abs" style="left:1152px;top:236.0px" width="19" height="16" viewBox="0 0 19 16"><path d="M2.400 11.300V6.300a5.200 5.200 0 0 1 10.400 0V13" fill="none" stroke="#706e6b" stroke-width="1.700"/><path d="M8.700 9.100l4.100 4.500 4.100-4.500" fill="none" stroke="#706e6b" stroke-width="1.700"/></svg>
<div class="ic" style="left:1180px;top:234.0px;background:#56aad0"><svg width="17" height="18" viewBox="0 0 17 18"><path d="M7.500 3.300L5.400 13.800M12 3.300L9.900 13.800M4.600 6.800h9M3.700 10.400h9" stroke="#fff" stroke-width="1.500" fill="none"/></svg></div>
<span id="t54" class="t " style="left:1207.10px;top:231px;font-size:14.3px;line-height:21px;color:#080707;letter-spacing:0.172px;">Set Type to Debit</span>
</div>
<div class="step">
<svg class="abs" style="left:1152px;top:256.5px" width="19" height="14" viewBox="0 0 19 14"><path d="M2.300 6.200l5.300 5.500L16.700 1.700" fill="none" stroke="#706e6b" stroke-width="1.900"/></svg>
<div class="ic" style="left:1180px;top:255.0px;background:#969492"><svg width="17" height="18" viewBox="0 0 17 18"><g fill="#fff"><rect x="3.400" y="4.500" width="10.400" height="1.300"/><path d="M7.700 3.200v3.900L5.100 5.150z"/><rect x="3.400" y="8.500" width="7.300" height="1.300"/><path d="M9 7.200v3.900l2.600-1.950z"/><rect x="12.300" y="8.500" width="1.500" height="1.300"/><rect x="3.400" y="12.500" width="10.400" height="1.300"/><path d="M7 11.200v3.900l-2.600-1.950z"/></g><rect x="7.900" y="4.300" width=".9" height="1.700" fill="#969492"/><rect x="7.200" y="12.300" width=".9" height="1.700" fill="#969492"/></svg></div>
<span id="t55" class="t " style="left:1207.10px;top:252px;font-size:14.3px;line-height:21px;color:#080707;letter-spacing:0.139px;">Extract Account Servicer Reference</span>
<svg class="abs" style="left:1207px;top:280.0px" width="15" height="10" viewBox="0 0 15 10"><path d="M1.400 0.200V4.800H12.600M9.900 1.600l3.400 3.200-3.400 3.300" fill="none" stroke="#706e6b" stroke-width="1.900"/></svg>
<span id="t56" class="t " style="left:1227.20px;top:273px;font-size:14.3px;line-height:21px;color:#080707;font-style:italic;letter-spacing:0.226px;">Account Servicer Reference = 9876546498751245</span>
</div>
<div class="step">
<svg class="abs" style="left:1152px;top:298.5px" width="19" height="14" viewBox="0 0 19 14"><path d="M2.300 6.200l5.300 5.500L16.700 1.700" fill="none" stroke="#706e6b" stroke-width="1.900"/></svg>
<div class="ic" style="left:1180px;top:297.0px;background:#969492"><svg width="17" height="18" viewBox="0 0 17 18"><g fill="#fff"><rect x="3.400" y="4.500" width="10.400" height="1.300"/><path d="M7.700 3.200v3.900L5.100 5.150z"/><rect x="3.400" y="8.500" width="7.300" height="1.300"/><path d="M9 7.200v3.900l2.600-1.950z"/><rect x="12.300" y="8.500" width="1.500" height="1.300"/><rect x="3.400" y="12.500" width="10.400" height="1.300"/><path d="M7 11.200v3.900l-2.600-1.950z"/></g><rect x="7.900" y="4.300" width=".9" height="1.700" fill="#969492"/><rect x="7.200" y="12.300" width=".9" height="1.700" fill="#969492"/></svg></div>
<span id="t57" class="t " style="left:1207.10px;top:294px;font-size:14.3px;line-height:21px;color:#080707;letter-spacing:0.338px;">Extract Amount (Raw)</span>
<svg class="abs" style="left:1207px;top:322.0px" width="15" height="10" viewBox="0 0 15 10"><path d="M1.400 0.200V4.800H12.600M9.900 1.600l3.400 3.200-3.400 3.300" fill="none" stroke="#706e6b" stroke-width="1.900"/></svg>
<span id="t58" class="t " style="left:1227.20px;top:315px;font-size:14.3px;line-height:21px;color:#080707;font-style:italic;letter-spacing:0.592px;">Custom 2 = 000000197611180</span>
</div>
<div class="step">
<svg class="abs" style="left:1152px;top:340.5px" width="19" height="14" viewBox="0 0 19 14"><path d="M2.300 6.200l5.300 5.500L16.700 1.700" fill="none" stroke="#706e6b" stroke-width="1.900"/></svg>
<div class="ic" style="left:1180px;top:339.0px;background:#969492"><svg width="17" height="18" viewBox="0 0 17 18"><rect x="3" y="3.200" width="11.400" height="11.700" rx="1.800" fill="#fff"/><path d="M5.100 6.400h5.700M5.100 9.200h6.600M5.100 12h5.400" stroke="#969492" stroke-width="1.200"/></svg></div>
<span id="t59" class="t " style="left:1207.10px;top:336px;font-size:14.3px;line-height:21px;color:#080707;letter-spacing:0.480px;">Extract Amount</span>
<svg class="abs" style="left:1207px;top:364.0px" width="15" height="10" viewBox="0 0 15 10"><path d="M1.400 0.200V4.800H12.600M9.900 1.600l3.400 3.200-3.400 3.300" fill="none" stroke="#706e6b" stroke-width="1.900"/></svg>
<span id="t60" class="t " style="left:1227.20px;top:357px;font-size:14.3px;line-height:21px;color:#080707;font-style:italic;letter-spacing:0.588px;">Amount = 197611.18</span>
</div>
<div class="step">
<svg class="abs" style="left:1152px;top:382.5px" width="19" height="14" viewBox="0 0 19 14"><path d="M2.300 6.200l5.300 5.500L16.700 1.700" fill="none" stroke="#706e6b" stroke-width="1.900"/></svg>
<div class="ic" style="left:1180px;top:381.0px;background:#969492"><svg width="17" height="18" viewBox="0 0 17 18"><g fill="#fff"><rect x="3.400" y="4.500" width="10.400" height="1.300"/><path d="M7.700 3.200v3.900L5.100 5.150z"/><rect x="3.400" y="8.500" width="7.300" height="1.300"/><path d="M9 7.200v3.900l2.600-1.950z"/><rect x="12.300" y="8.500" width="1.500" height="1.300"/><rect x="3.400" y="12.500" width="10.400" height="1.300"/><path d="M7 11.200v3.900l-2.600-1.950z"/></g><rect x="7.900" y="4.300" width=".9" height="1.700" fill="#969492"/><rect x="7.200" y="12.300" width=".9" height="1.700" fill="#969492"/></svg></div>
<span id="t61" class="t " style="left:1207.10px;top:378px;font-size:14.3px;line-height:21px;color:#080707;letter-spacing:0.106px;">Extract Value Date (Raw)</span>
<svg class="abs" style="left:1207px;top:406.0px" width="15" height="10" viewBox="0 0 15 10"><path d="M1.400 0.200V4.800H12.600M9.900 1.600l3.400 3.200-3.400 3.300" fill="none" stroke="#706e6b" stroke-width="1.900"/></svg>
<span id="t62" class="t " style="left:1227.20px;top:399px;font-size:14.3px;line-height:21px;color:#080707;font-style:italic;letter-spacing:0.357px;">Custom 3 = 191218</span>
</div>
<div class="step">
<svg class="abs" style="left:1152px;top:424.5px" width="19" height="14" viewBox="0 0 19 14"><path d="M2.300 6.200l5.300 5.500L16.700 1.700" fill="none" stroke="#706e6b" stroke-width="1.900"/></svg>
<div class="ic" style="left:1180px;top:423.0px;background:#969492"><svg width="17" height="18" viewBox="0 0 17 18"><rect x="3" y="3.200" width="11.400" height="11.700" rx="1.800" fill="#fff"/><path d="M5.100 6.400h5.700M5.100 9.200h6.600M5.100 12h5.400" stroke="#969492" stroke-width="1.200"/></svg></div>
<span id="t63" class="t " style="left:1207.10px;top:420px;font-size:14.3px;line-height:21px;color:#080707;letter-spacing:0.136px;">Extract Value Date</span>
<svg class="abs" style="left:1207px;top:448.0px" width="15" height="10" viewBox="0 0 15 10"><path d="M1.400 0.200V4.800H12.600M9.900 1.600l3.400 3.200-3.400 3.300" fill="none" stroke="#706e6b" stroke-width="1.900"/></svg>
<span id="t64" class="t " style="left:1227.20px;top:441px;font-size:14.3px;line-height:21px;color:#080707;font-style:italic;letter-spacing:0.303px;">Value Date = 19-12-2018 00:00</span>
</div>
<div class="step">
<svg class="abs" style="left:1152px;top:466.5px" width="19" height="14" viewBox="0 0 19 14"><path d="M2.300 6.200l5.300 5.500L16.700 1.700" fill="none" stroke="#706e6b" stroke-width="1.900"/></svg>
<div class="ic" style="left:1180px;top:465.0px;background:#969492"><svg width="17" height="18" viewBox="0 0 17 18"><g fill="#fff"><rect x="3.400" y="4.500" width="10.400" height="1.300"/><path d="M7.700 3.200v3.900L5.100 5.150z"/><rect x="3.400" y="8.500" width="7.300" height="1.300"/><path d="M9 7.200v3.900l2.600-1.950z"/><rect x="12.300" y="8.500" width="1.500" height="1.300"/><rect x="3.400" y="12.500" width="10.400" height="1.300"/><path d="M7 11.200v3.900l-2.600-1.950z"/></g><rect x="7.900" y="4.300" width=".9" height="1.700" fill="#969492"/><rect x="7.200" y="12.300" width=".9" height="1.700" fill="#969492"/></svg></div>
<span id="t65" class="t " style="left:1207.10px;top:462px;font-size:14.3px;line-height:21px;color:#080707;letter-spacing:0.285px;">Extract Reported Payment Method Code</span>
<svg class="abs" style="left:1207px;top:490.0px" width="15" height="10" viewBox="0 0 15 10"><path d="M1.400 0.200V4.800H12.600M9.900 1.600l3.400 3.200-3.400 3.300" fill="none" stroke="#706e6b" stroke-width="1.900"/></svg>
<span id="t66" class="t " style="left:1227.20px;top:483px;font-size:14.3px;line-height:21px;color:#080707;font-style:italic;letter-spacing:0.195px;">Reported Payment Method Code = 01</span>
</div>
<div class="step">
<svg class="abs" style="left:1152px;top:508.5px" width="19" height="14" viewBox="0 0 19 14"><path d="M2.300 6.200l5.300 5.500L16.700 1.700" fill="none" stroke="#706e6b" stroke-width="1.900"/></svg>
<div class="ic" style="left:1180px;top:507.0px;background:#54698d"><svg width="17" height="18" viewBox="0 0 17 18"><path d="M3.500 5.200l4.700 3.400-4.700 3.400" fill="none" stroke="#fff" stroke-width="1.400"/><rect x="7.300" y="12" width="6.700" height="1.500" fill="#fff"/></svg></div>
<span id="t67" class="t " style="left:1207.10px;top:504px;font-size:14.3px;line-height:21px;color:#080707;letter-spacing:0.303px;">Set Reported Payment Method</span>
<svg class="abs" style="left:1207px;top:532.0px" width="15" height="10" viewBox="0 0 15 10"><path d="M1.400 0.200V4.800H12.600M9.900 1.600l3.400 3.200-3.400 3.300" fill="none" stroke="#706e6b" stroke-width="1.900"/></svg>
<span id="t68" class="t " style="left:1227.20px;top:525px;font-size:14.3px;line-height:21px;color:#080707;font-style:italic;letter-spacing:0.111px;">Reported Payment Method = Domestic or local SEPA credit</span>
<span id="t69" class="t " style="left:1207.10px;top:546px;font-size:14.3px;line-height:21px;color:#080707;font-style:italic;letter-spacing:0.075px;">transfers</span>
</div>
<div class="step">
<svg class="abs" style="left:1152px;top:571.5px" width="19" height="14" viewBox="0 0 19 14"><path d="M2.300 6.200l5.300 5.500L16.700 1.700" fill="none" stroke="#706e6b" stroke-width="1.900"/></svg>
<div class="ic" style="left:1180px;top:570.0px;background:#969492"><svg width="17" height="18" viewBox="0 0 17 18"><g fill="#fff"><rect x="3.400" y="4.500" width="10.400" height="1.300"/><path d="M7.700 3.200v3.900L5.100 5.150z"/><rect x="3.400" y="8.500" width="7.300" height="1.300"/><path d="M9 7.200v3.900l2.600-1.950z"/><rect x="12.300" y="8.500" width="1.500" height="1.300"/><rect x="3.400" y="12.500" width="10.400" height="1.300"/><path d="M7 11.200v3.900l-2.600-1.950z"/></g><rect x="7.900" y="4.300" width=".9" height="1.700" fill="#969492"/><rect x="7.200" y="12.300" width=".9" height="1.700" fill="#969492"/></svg></div>
<span id="t70" class="t " style="left:1207.10px;top:567px;font-size:14.3px;line-height:21px;color:#080707;letter-spacing:0.278px;">Extract Description</span>
<svg class="abs" style="left:1207px;top:595.0px" width="15" height="10" viewBox="0 0 15 10"><path d="M1.400 0.200V4.800H12.600M9.900 1.600l3.400 3.200-3.400 3.300" fill="none" stroke="#706e6b" stroke-width="1.900"/></svg>
<span id="t71" class="t " style="left:1227.20px;top:588px;font-size:14.3px;line-height:21px;color:#080707;font-style:italic;letter-spacing:0.277px;">Additional Entry</span>
<span id="t72" class="t " style="left:1207.10px;top:609px;font-size:14.3px;line-height:21px;color:#080707;font-style:italic;letter-spacing:0.559px;">Information = 7013X000001mAZbQAM/abcdefg</span>
</div>
<div class="step">
<svg class="abs" style="left:1152px;top:634.5px" width="19" height="14" viewBox="0 0 19 14"><path d="M2.300 6.200l5.300 5.500L16.700 1.700" fill="none" stroke="#706e6b" stroke-width="1.900"/></svg>
<div class="ic" style="left:1180px;top:633.0px;background:#969492"><svg width="17" height="18" viewBox="0 0 17 18"><g fill="#fff"><rect x="3.400" y="4.500" width="10.400" height="1.300"/><path d="M7.700 3.200v3.900L5.100 5.150z"/><rect x="3.400" y="8.500" width="7.300" height="1.300"/><path d="M9 7.200v3.900l2.600-1.950z"/><rect x="12.300" y="8.500" width="1.500" height="1.300"/><rect x="3.400" y="12.500" width="10.400" height="1.300"/><path d="M7 11.200v3.900l-2.600-1.950z"/></g><rect x="7.900" y="4.300" width=".9" height="1.700" fill="#969492"/><rect x="7.200" y="12.300" width=".9" height="1.700" fill="#969492"/></svg></div>
<span id="t73" class="t " style="left:1207.10px;top:630px;font-size:14.3px;line-height:21px;color:#080707;letter-spacing:0.087px;">Extract Entry Date (Raw)</span>
<svg class="abs" style="left:1207px;top:658.0px" width="15" height="10" viewBox="0 0 15 10"><path d="M1.400 0.200V4.800H12.600M9.900 1.600l3.400 3.200-3.400 3.300" fill="none" stroke="#706e6b" stroke-width="1.900"/></svg>
<span id="t74" class="t " style="left:1227.20px;top:651px;font-size:14.3px;line-height:21px;color:#080707;font-style:italic;letter-spacing:0.357px;">Custom 4 = 191218</span>
</div>
<div class="step">
<svg class="abs" style="left:1152px;top:676.5px" width="19" height="14" viewBox="0 0 19 14"><path d="M2.300 6.200l5.300 5.500L16.700 1.700" fill="none" stroke="#706e6b" stroke-width="1.900"/></svg>
<div class="ic" style="left:1180px;top:675.0px;background:#969492"><svg width="17" height="18" viewBox="0 0 17 18"><rect x="3" y="3.200" width="11.400" height="11.700" rx="1.800" fill="#fff"/><path d="M5.100 6.400h5.700M5.100 9.200h6.600M5.100 12h5.400" stroke="#969492" stroke-width="1.200"/></svg></div>
<span id="t75" class="t " style="left:1207.10px;top:672px;font-size:14.3px;line-height:21px;color:#080707;letter-spacing:0.100px;">Extract Entry Date</span>
<svg class="abs" style="left:1207px;top:700.0px" width="15" height="10" viewBox="0 0 15 10"><path d="M1.400 0.200V4.800H12.600M9.900 1.600l3.400 3.200-3.400 3.300" fill="none" stroke="#706e6b" stroke-width="1.900"/></svg>
<span id="t76" class="t " style="left:1227.20px;top:693px;font-size:14.3px;line-height:21px;color:#080707;font-style:italic;letter-spacing:0.354px;">Date = 19-12-2018 00:00</span>
</div>
<div class="step">
<svg class="abs" style="left:1152px;top:718.5px" width="19" height="14" viewBox="0 0 19 14"><path d="M2.300 6.200l5.300 5.500L16.700 1.700" fill="none" stroke="#706e6b" stroke-width="1.900"/></svg>
<div class="ic" style="left:1180px;top:717.0px;background:#969492"><svg width="17" height="18" viewBox="0 0 17 18"><g fill="#fff"><rect x="3.400" y="4.500" width="10.400" height="1.300"/><path d="M7.700 3.200v3.900L5.100 5.150z"/><rect x="3.400" y="8.500" width="7.300" height="1.300"/><path d="M9 7.200v3.900l2.600-1.950z"/><rect x="12.300" y="8.500" width="1.500" height="1.300"/><rect x="3.400" y="12.500" width="10.400" height="1.300"/><path d="M7 11.200v3.900l-2.600-1.950z"/></g><rect x="7.900" y="4.300" width=".9" height="1.700" fill="#969492"/><rect x="7.200" y="12.300" width=".9" height="1.700" fill="#969492"/></svg></div>
<span id="t77" class="t " style="left:1207.10px;top:714px;font-size:14.3px;line-height:21px;color:#080707;letter-spacing:0.083px;">Extract Payment Reference</span>
<svg class="abs" style="left:1207px;top:742.0px" width="15" height="10" viewBox="0 0 15 10"><path d="M1.400 0.200V4.800H12.600M9.900 1.600l3.400 3.200-3.400 3.300" fill="none" stroke="#706e6b" stroke-width="1.900"/></svg>
<span id="t78" class="t " style="left:1227.20px;top:735px;font-size:14.3px;line-height:21px;color:#080707;font-style:italic;letter-spacing:0.173px;">Payment Reference = 0000123456</span>
</div>
<div class="step">
<svg class="abs" style="left:1152px;top:760.5px" width="19" height="14" viewBox="0 0 19 14"><path d="M2.300 6.200l5.300 5.500L16.700 1.700" fill="none" stroke="#706e6b" stroke-width="1.900"/></svg>
<div class="ic" style="left:1180px;top:759.0px;background:#969492"><svg width="17" height="18" viewBox="0 0 17 18"><g fill="#fff"><rect x="3.400" y="4.500" width="10.400" height="1.300"/><path d="M7.700 3.200v3.900L5.100 5.150z"/><rect x="3.400" y="8.500" width="7.300" height="1.300"/><path d="M9 7.200v3.900l2.600-1.950z"/><rect x="12.300" y="8.500" width="1.500" height="1.300"/><rect x="3.400" y="12.500" width="10.400" height="1.300"/><path d="M7 11.200v3.900l-2.600-1.950z"/></g><rect x="7.900" y="4.300" width=".9" height="1.700" fill="#969492"/><rect x="7.200" y="12.300" width=".9" height="1.700" fill="#969492"/></svg></div>
<span id="t79" class="t " style="left:1207.10px;top:756px;font-size:14.3px;line-height:21px;color:#080707;letter-spacing:0.130px;">Extract End To End ID</span>
<svg class="abs" style="left:1207px;top:784.0px" width="15" height="10" viewBox="0 0 15 10"><path d="M1.400 0.200V4.800H12.600M9.900 1.600l3.400 3.200-3.400 3.300" fill="none" stroke="#706e6b" stroke-width="1.900"/></svg>
<span id="t80" class="t " style="left:1227.20px;top:777px;font-size:14.3px;line-height:21px;color:#080707;font-style:italic;letter-spacing:0.216px;">End To End ID = 0000123456</span>
</div>
<div class="step">
<svg class="abs" style="left:1152px;top:802.5px" width="19" height="14" viewBox="0 0 19 14"><path d="M2.300 6.200l5.300 5.500L16.700 1.700" fill="none" stroke="#706e6b" stroke-width="1.900"/></svg>
<div class="ic" style="left:1180px;top:801.0px;background:#969492"><svg width="17" height="18" viewBox="0 0 17 18"><g fill="#fff"><rect x="3.400" y="4.500" width="10.400" height="1.300"/><path d="M7.700 3.200v3.900L5.100 5.150z"/><rect x="3.400" y="8.500" width="7.300" height="1.300"/><path d="M9 7.200v3.900l2.600-1.950z"/><rect x="12.300" y="8.500" width="1.500" height="1.300"/><rect x="3.400" y="12.500" width="10.400" height="1.300"/><path d="M7 11.200v3.900l-2.600-1.950z"/></g><rect x="7.900" y="4.300" width=".9" height="1.700" fill="#969492"/><rect x="7.200" y="12.300" width=".9" height="1.700" fill="#969492"/></svg></div>
<span id="t81" class="t " style="left:1207.10px;top:798px;font-size:14.3px;line-height:21px;color:#080707;letter-spacing:0.213px;">Extract IBAN</span>
<svg class="abs" style="left:1207px;top:826.0px" width="15" height="10" viewBox="0 0 15 10"><path d="M1.400 0.200V4.800H12.600M9.900 1.600l3.400 3.200-3.400 3.300" fill="none" stroke="#706e6b" stroke-width="1.900"/></svg>
<span id="t82" class="t " style="left:1227.20px;top:819px;font-size:14.3px;line-height:21px;color:#080707;font-style:italic;letter-spacing:0.379px;">Bank Account Number = BE68539007547034</span>
</div>
<div class="step">
<svg class="abs" style="left:1152px;top:844.5px" width="19" height="14" viewBox="0 0 19 14"><path d="M2.300 6.200l5.300 5.500L16.700 1.700" fill="none" stroke="#706e6b" stroke-width="1.900"/></svg>
<div class="ic" style="left:1180px;top:843.0px;background:#969492"><svg width="17" height="18" viewBox="0 0 17 18"><g fill="#fff"><rect x="3.400" y="4.500" width="10.400" height="1.300"/><path d="M7.700 3.200v3.900L5.100 5.150z"/><rect x="3.400" y="8.500" width="7.300" height="1.300"/><path d="M9 7.200v3.900l2.600-1.950z"/><rect x="12.300" y="8.500" width="1.500" height="1.300"/><rect x="3.400" y="12.500" width="10.400" height="1.300"/><path d="M7 11.200v3.900l-2.600-1.950z"/></g><rect x="7.900" y="4.300" width=".9" height="1.700" fill="#969492"/><rect x="7.200" y="12.300" width=".9" height="1.700" fill="#969492"/></svg></div>
<span id="t83" class="t " style="left:1207.10px;top:840px;font-size:14.3px;line-height:21px;color:#080707;letter-spacing:0.343px;">Extract Account Holder Name</span>
</div>
</main>
</body></html>
